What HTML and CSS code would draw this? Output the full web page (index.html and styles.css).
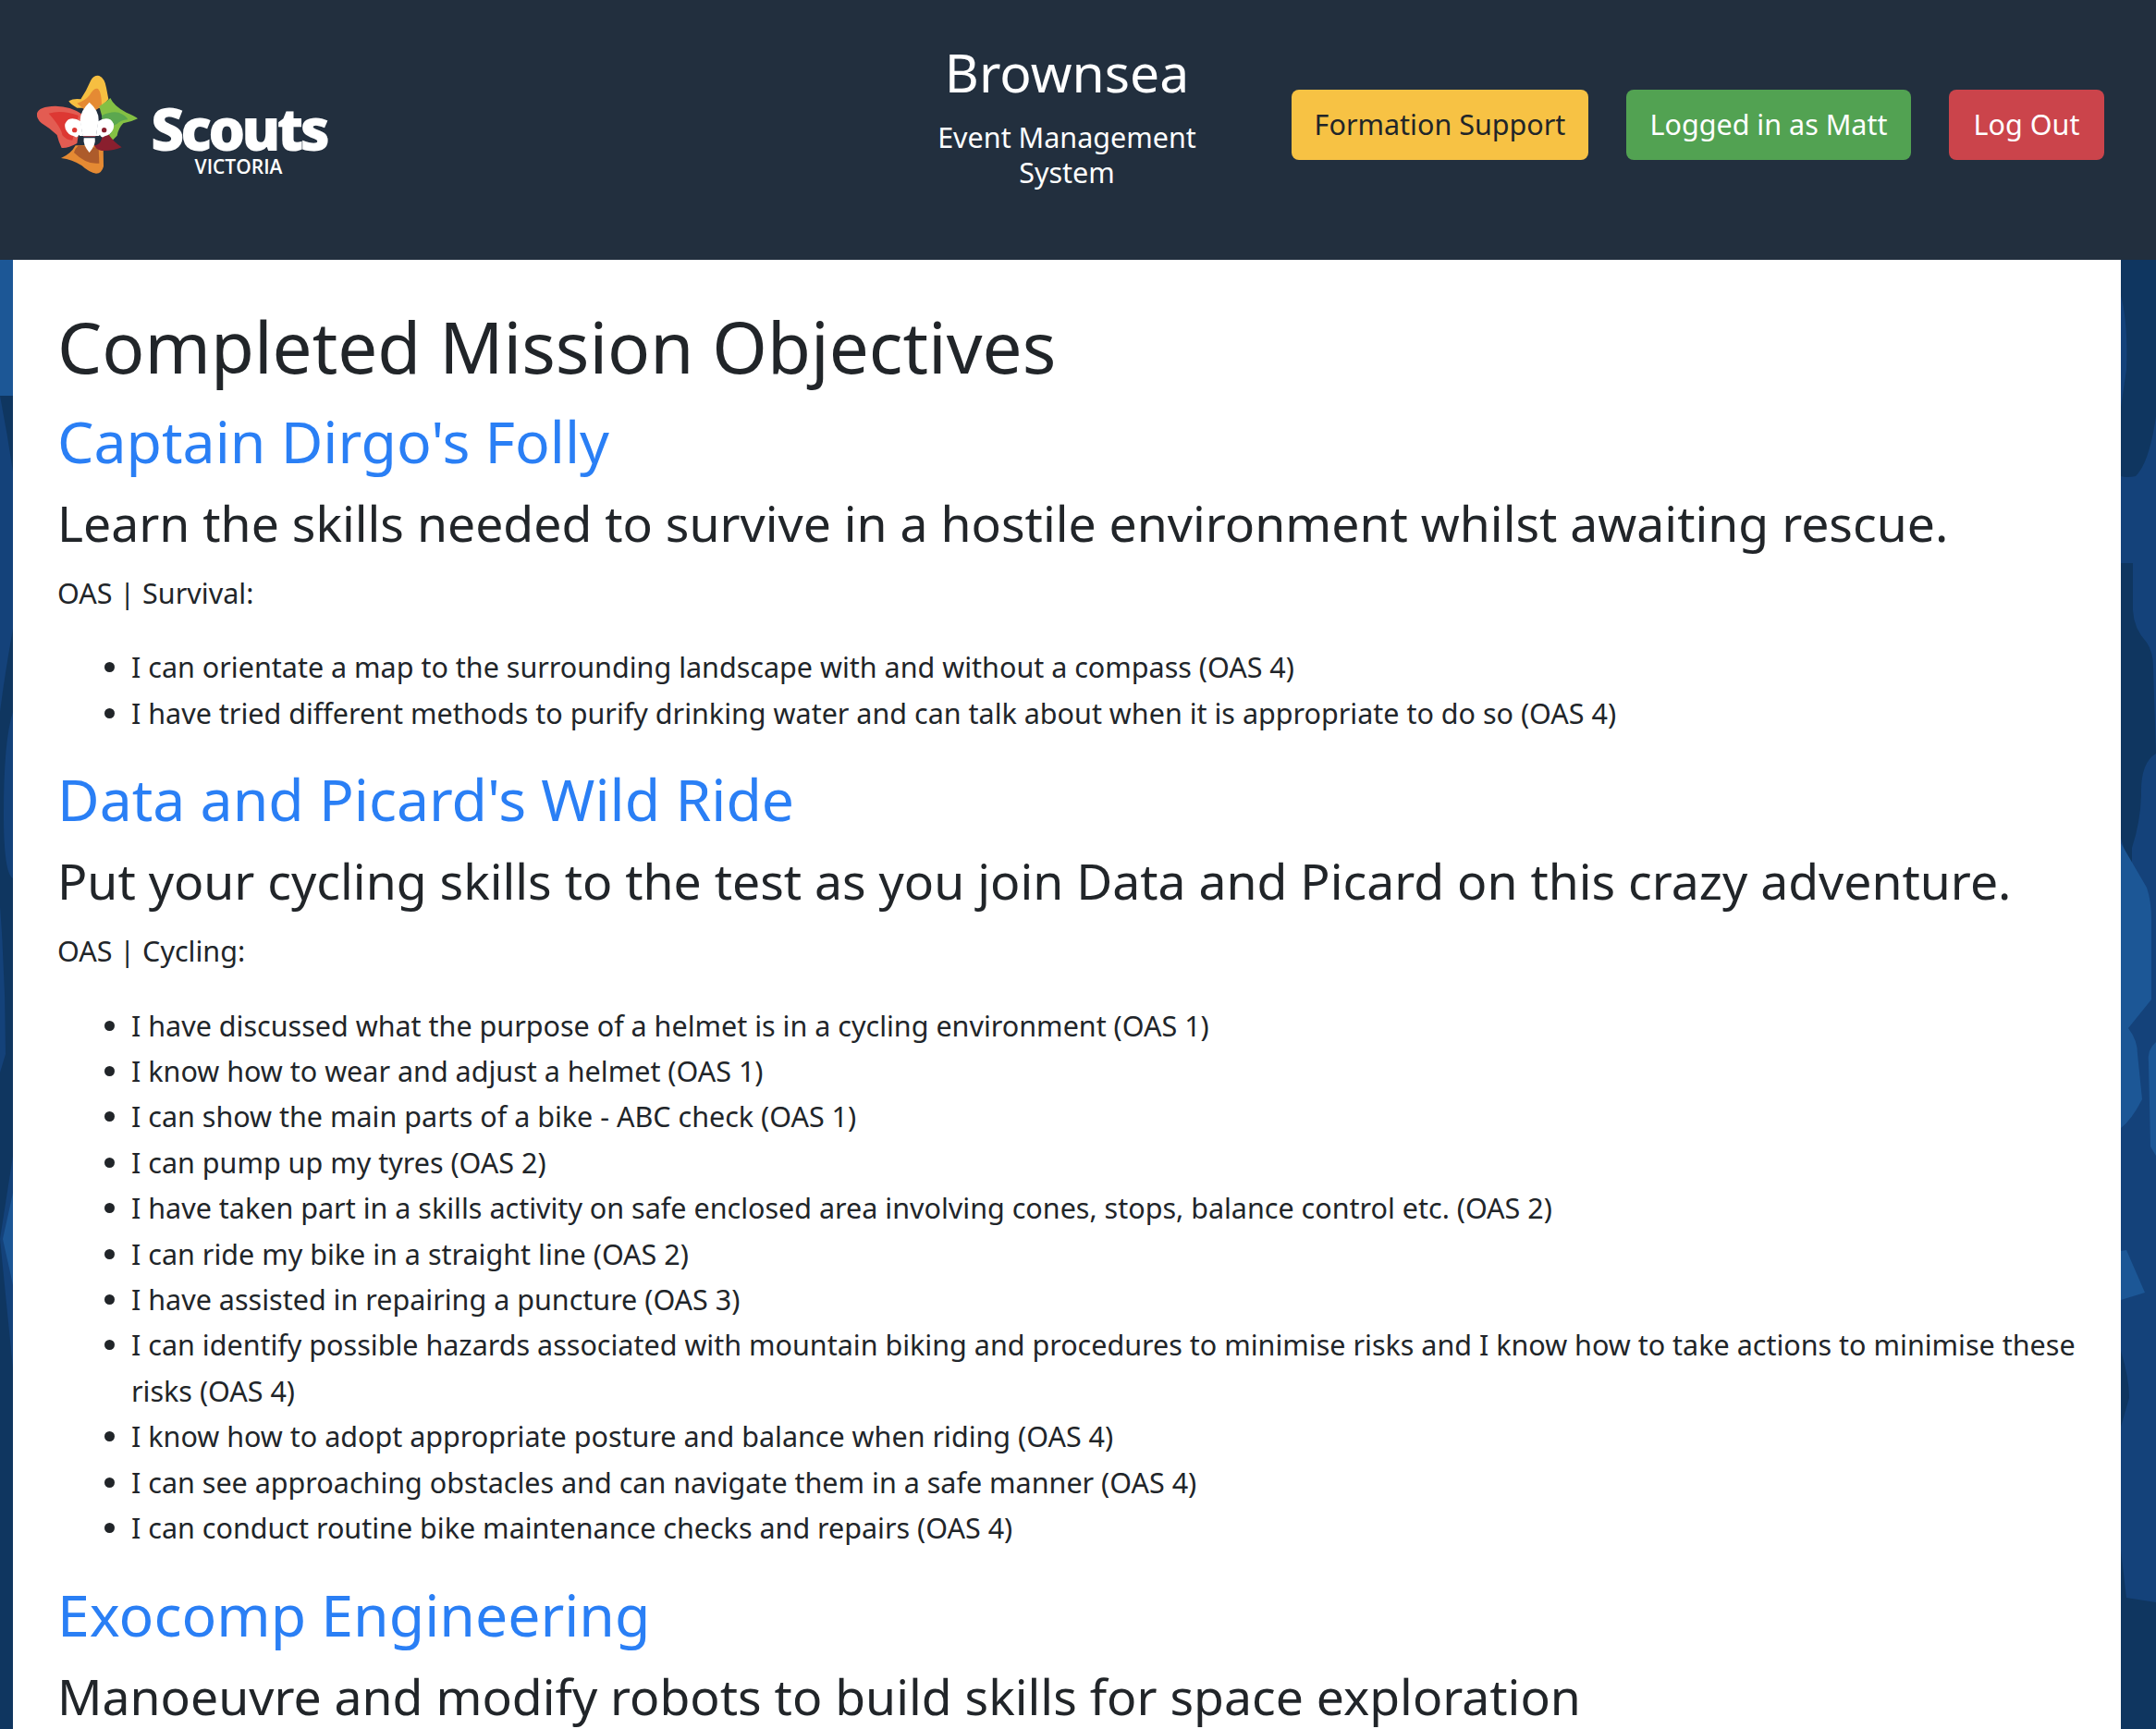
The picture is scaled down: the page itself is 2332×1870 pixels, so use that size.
FILE: index.html
```html
<!DOCTYPE html>
<html lang="en">
  <head>
    <meta charset="UTF-8" />
    <title>Completed Mission Objectives</title>
    <link rel="stylesheet" href="styles.css">
  </head>
  <body>
    <svg class="backdrop" viewBox="0 0 2332 1870" aria-hidden="true">
      <rect width="2332" height="1870" fill="#14427a" />
      <!-- left strip -->
      <rect y="281" width="14" height="147" fill="#1c5796" />
      <path fill="#0f3660" d="M0 428H14V510Q8 470 0 428Z" />
      <path fill="#0f3660" d="M14 680Q5 730 0 770V1870H14Z" />
      <path fill="#14427a" d="M14 770Q4 800 4 880Q4 945 14 950Z" />
      <path fill="#14427a" d="M0 980Q6 1060 6 1140L0 1160Z" />
      <path fill="#14427a" d="M14 1250L0 1340L14 1480Z" />
      <path fill="#1c5796" d="M14 1290L3 1340L14 1390Z" />
      <!-- right strip -->
      <path fill="#0f3660" d="M2294 281H2332V450Q2325 500 2310 515Q2300 517 2294 515Z" />
      <path fill="#14427a" d="M2294 320Q2302 350 2300 400L2294 440Z" />
      <path fill="#0f3660" d="M2294 609H2307V660Q2308 680 2322 695Q2329 705 2329 722L2332 815Q2315 825 2316 860Q2315 890 2306 917V943L2294 907Z" />
      <path fill="#1c5796" d="M2294 912L2322 960Q2327 975 2327 994V1081L2302 1112Q2312 1125 2312 1140L2317 1189Q2305 1212 2294 1220Z" />
      <path fill="#1c5796" d="M2332 1127Q2322 1135 2324 1150L2326 1240L2332 1250Z" />
      <path fill="#1c5796" d="M2294 1353L2300 1352L2320 1398L2294 1406Z" />
      <path fill="#0f3660" d="M2294 1461Q2303 1490 2303 1512L2294 1543Z" />
      <path fill="#0f3660" d="M2294 1677L2300 1728L2332 1733V1870H2294Z" />
    </svg>
    <header class="topbar">
      <svg class="logo" viewBox="0 0 390 390" aria-label="Scouts Victoria logo">
        <path fill="#f6bf41" d="M133 118Q150 108 172 112Q190 85 205 50Q215 33 232 36Q250 44 255 75L262 112L235 140L160 140Q140 130 133 118Z" />
        <path fill="#e58a33" d="M160 125Q185 118 200 100Q215 72 228 78Q240 90 240 135L200 160Z" />
        <path fill="#84c044" d="M232 135Q255 120 268 108Q280 135 320 155Q350 167 357 175Q335 186 310 190Q295 205 290 230L265 255Z" />
        <path fill="#5ba74f" d="M240 165Q270 150 295 155Q320 165 325 178Q300 180 290 192Q275 195 270 225L245 235Z" />
        <path fill="#e58a33" d="M108 303Q140 290 155 262L245 262L246 330Q240 353 222 353Q200 350 175 327Q145 308 108 303Z" />
        <path fill="#ad5b2b" d="M150 285Q155 270 165 262L230 270L232 320Q190 325 150 285Z" />
        <path fill="#e35c52" d="M30 158Q35 135 90 134Q140 135 175 160L160 255Q130 272 110 270Q100 250 95 228Q70 205 45 190Q28 175 30 158Z" />
        <path fill="#dd3833" d="M68 158Q110 145 165 165L145 245Q125 245 112 228Q110 205 68 158Z" />
        <path fill="#8a1f2e" d="M215 262Q235 262 240 240Q245 218 262 225Q278 250 305 268Q280 280 240 279Q222 276 215 262Z" />
        <path fill="#fff" d="M200 122Q232 150 230 180Q226 205 222 228H178Q172 200 170 180Q170 150 200 122Z" />
        <path fill="#fff" d="M182 238H218Q222 260 200 285Q178 260 182 238Z" />
        <path fill="#fff" d="M172 184Q150 170 132 178Q116 190 122 208Q130 228 150 232Q160 240 166 228H178Z" />
        <path fill="#fff" d="M228 184Q250 170 268 178Q284 190 278 208Q270 228 250 232Q240 240 234 228H222Z" />
        <circle fill="#dd3833" cx="152" cy="212" r="8" />
        <circle fill="#8a1f2e" cx="248" cy="212" r="8" />
        <rect fill="#fff" x="168" y="227" width="64" height="4" />
        <rect fill="#c7505a" x="180" y="231" width="40" height="2" />
      </svg>
      <div class="wordmark">
        <span class="wordmark-name">Scouts</span>
        <span class="wordmark-state">VICTORIA</span>
      </div>
      <div class="system-name">
        <h2>Brownsea</h2>
        <p>Event Management System</p>
      </div>
      <nav class="actions">
        <a class="btn btn-warning">Formation Support</a>
        <a class="btn btn-success">Logged in as Matt</a>
        <a class="btn btn-danger">Log Out</a>
      </nav>
    </header>
    <main class="sheet">
      <h1>Completed Mission Objectives</h1>

      <h2 class="mission-title">Captain Dirgo's Folly</h2>
      <h3 class="mission-goal">Learn the skills needed to survive in a hostile environment whilst awaiting rescue.</h3>
      <p class="oas-heading">OAS | Survival:</p>
      <ul>
        <li>I can orientate a map to the surrounding landscape with and without a compass (OAS 4)</li>
        <li>I have tried different methods to purify drinking water and can talk about when it is appropriate to do so (OAS 4)</li>
      </ul>

      <h2 class="mission-title">Data and Picard's Wild Ride</h2>
      <h3 class="mission-goal">Put your cycling skills to the test as you join Data and Picard on this crazy adventure.</h3>
      <p class="oas-heading">OAS | Cycling:</p>
      <ul>
        <li>I have discussed what the purpose of a helmet is in a cycling environment (OAS 1)</li>
        <li>I know how to wear and adjust a helmet (OAS 1)</li>
        <li>I can show the main parts of a bike - ABC check (OAS 1)</li>
        <li>I can pump up my tyres (OAS 2)</li>
        <li>I have taken part in a skills activity on safe enclosed area involving cones, stops, balance control etc. (OAS 2)</li>
        <li>I can ride my bike in a straight line (OAS 2)</li>
        <li>I have assisted in repairing a puncture (OAS 3)</li>
        <li>I can identify possible hazards associated with mountain biking and procedures to minimise risks and I know how to take actions to minimise these risks (OAS 4)</li>
        <li>I know how to adopt appropriate posture and balance when riding (OAS 4)</li>
        <li>I can see approaching obstacles and can navigate them in a safe manner (OAS 4)</li>
        <li>I can conduct routine bike maintenance checks and repairs (OAS 4)</li>
      </ul>

      <h2 class="mission-title">Exocomp Engineering</h2>
      <h3 class="mission-goal">Manoeuvre and modify robots to build skills for space exploration</h3>
    </main>
  </body>
</html>
```

FILE: styles.css
```css
body {
  margin: 0;
  height: 1870px;
  overflow: hidden;
  font-family: "Noto Sans", "Open Sans", sans-serif;
  font-size: 30.5px;
  line-height: 49.4px;
  color: #212529;
  background: #14427a;
}

.backdrop {
  position: fixed;
  top: 0;
  left: 0;
  width: 2332px;
  height: 1870px;
  z-index: -1;
}

.topbar {
  display: flex;
  align-items: flex-start;
  height: 281px;
  padding: 0 56px 0 30px;
  box-sizing: border-box;
  background: #222f3e;
  color: white;
}

.logo {
  width: 130px;
  height: 130px;
  margin-top: 70px;
  flex: none;
}

.wordmark {
  display: flex;
  flex-direction: column;
  align-items: center;
  width: 196px;
  margin-top: 111px;
  flex: none;
  font-family: "Open Sans", sans-serif;
  font-weight: 800;
}

.wordmark-name {
  font-size: 63px;
  line-height: 56px;
  letter-spacing: -4px;
}

.wordmark-state {
  margin-top: 1px;
  font-size: 21px;
  line-height: 24px;
  font-weight: 600;
}

.system-name {
  width: 340px;
  margin: 40px 0 0 628px;
  flex: none;
  text-align: center;
}

.system-name h2 {
  margin: 0;
  font-size: 57px;
  font-weight: 400;
  line-height: 76px;
}

.system-name p {
  margin: 13px 0 0;
  line-height: 38px;
}

.actions {
  display: flex;
  gap: 41px;
  margin: 97px 0 0 auto;
}

.btn {
  height: 76px;
  border-radius: 8px;
  line-height: 74px;
  text-align: center;
  white-space: nowrap;
}

.btn-warning {
  width: 321px;
  background: #f7c244;
  color: #212529;
}

.btn-success {
  width: 308px;
  background: #52a252;
}

.btn-danger {
  width: 168px;
  background: #cb444b;
}

.sheet {
  margin: 0 38px 0 14px;
  padding: 43px 48px 0;
  height: 1589px;
  box-sizing: border-box;
  overflow: hidden;
  background: white;
}

h1 {
  margin: 0 0 10px;
  font-size: 76.4px;
  font-weight: 400;
  line-height: 100px;
}

.mission-title {
  margin: 0;
  font-size: 62.5px;
  font-weight: 400;
  line-height: 86px;
  color: #2a7ff5;
}

.mission-goal {
  margin: 0;
  padding-top: 8px;
  font-size: 53.5px;
  font-weight: 400;
  line-height: 76px;
}

.oas-heading {
  margin: 0 0 31px;
  padding-top: 13px;
}

ul {
  margin: 0 0 25px;
  padding-left: 80px;
}
```
